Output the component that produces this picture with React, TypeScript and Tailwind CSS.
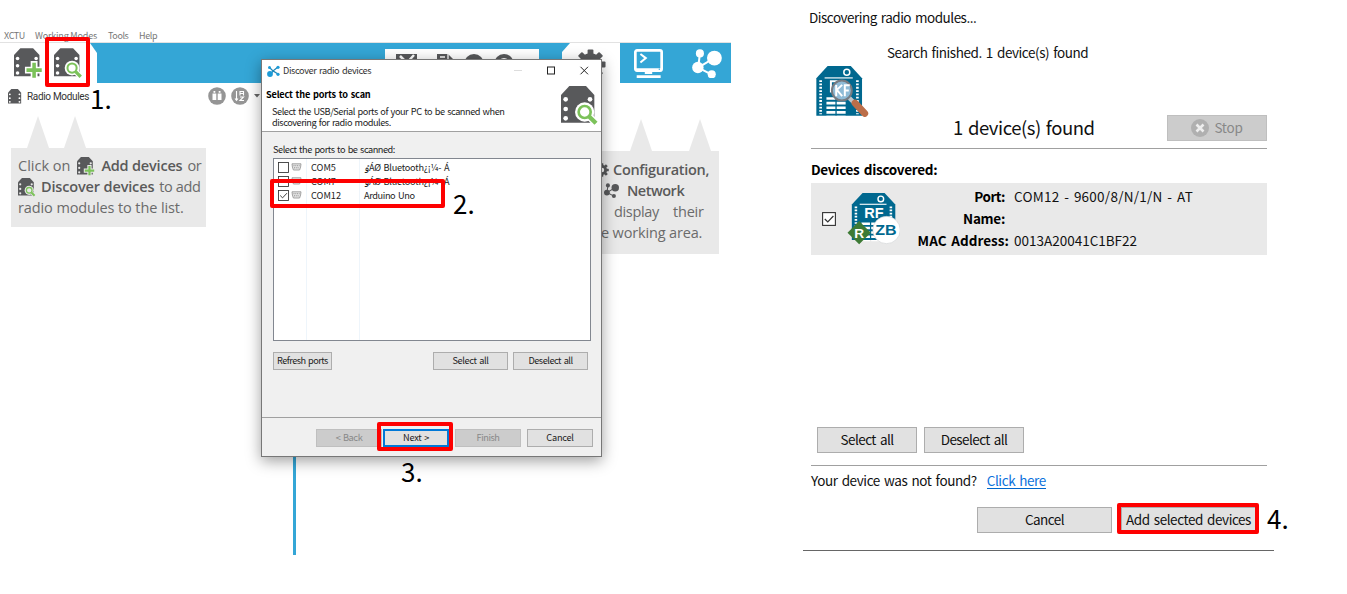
import type { ReactNode } from "react";

function T({ className = "", children }: { className?: string; children: ReactNode }) {
  return <span className={"inline-block whitespace-pre " + className}>{children}</span>;
}

function Module({ kind, className, halo = "#fff" }: { kind: "add" | "find" | "plain"; className: string; halo?: string }) {
  return (
    <svg viewBox="0 0 114 120" className={"shrink-0 " + className}>
      <path d="M0 27 25 0H75L100 27V110H0Z" fill="#58595b" />
      <g fill={halo}>
        <circle cx="14" cy="40" r="7" />
        <circle cx="14" cy="69" r="7" />
        <circle cx="14" cy="97" r="7" />
        <circle cx="87" cy="40" r="7" />
        {kind === "plain" && <circle cx="87" cy="69" r="7" />}
        {kind === "plain" && <circle cx="87" cy="97" r="7" />}
      </g>
      {kind === "find" && (
        <>
          <circle cx="71" cy="78" r="29" fill={halo} />
          <path d="m86 93 20 20" stroke={halo} strokeWidth="22" />
          <circle cx="71" cy="78" r="18" fill="none" stroke="#7cc25a" strokeWidth="8" />
          <path d="m85 92 20 20" stroke="#7cc25a" strokeWidth="13" />
        </>
      )}
      {kind === "add" && (
        <>
          <path d="M79 50V122M43 86H114" stroke={halo} strokeWidth="27" />
          <path d="M79 57V116M49 86H109" stroke="#7cc25a" strokeWidth="14" />
        </>
      )}
    </svg>
  );
}

function Gear({ className }: { className: string }) {
  return (
    <svg viewBox="-16 -16 32 32" className={"shrink-0 " + className}>
      <g fill="#58595b">
        <rect x="-3" y="-15.5" width="6" height="31" rx="1" />
        <rect x="-3" y="-15.5" width="6" height="31" rx="1" transform="rotate(45)" />
        <rect x="-3" y="-15.5" width="6" height="31" rx="1" transform="rotate(90)" />
        <rect x="-3" y="-15.5" width="6" height="31" rx="1" transform="rotate(135)" />
        <circle r="11.5" />
      </g>
      <circle r="5" fill="#fff" />
    </svg>
  );
}

function Network({ className }: { className: string }) {
  return (
    <svg viewBox="0 0 88 86" className={"shrink-0 " + className} fill="currentColor" stroke="currentColor">
      <path d="M23 13 18 55 66 26M18 55 58 76" fill="none" strokeWidth="6" />
      <circle cx="23" cy="13" r="12" stroke="none" />
      <circle cx="66" cy="27" r="22" stroke="none" />
      <circle cx="17" cy="55" r="17" stroke="none" />
      <circle cx="58" cy="75" r="12" stroke="none" />
    </svg>
  );
}

function Monitor() {
  return (
    <svg viewBox="0 0 86 86" className="h-[29px] w-[29px] shrink-0">
      <rect x="4" y="4" width="78" height="60" rx="5" fill="none" stroke="#fff" strokeWidth="8" />
      <path d="M19 15 35 27 19 40" fill="none" stroke="#fff" strokeWidth="6" />
      <path d="M4 57H82V66H4ZM32 66H54V74H32ZM8 78H79V86H8Z" fill="#fff" />
      <circle cx="75" cy="60" r="2" fill="#34a6d6" />
    </svg>
  );
}

function Port() {
  return (
    <svg viewBox="0 0 11 8" className="h-2 w-[11px] shrink-0">
      <path d="M1 .8H10L9.6 4 8.6 7H2.4L1.4 4Z" fill="#e4e4e4" stroke="#9a9a9a" strokeWidth=".9" />
      <path d="M2.5 2.7H8.6M3 4.8H8" stroke="#888" strokeWidth=".9" strokeDasharray="1 .8" />
    </svg>
  );
}

function Check({ on, className }: { on?: boolean; className: string }) {
  return (
    <svg viewBox="0 0 14 14" className={"shrink-0 " + className}>
      <rect x=".6" y=".6" width="12.8" height="12.8" fill="#fff" stroke="#333" strokeWidth="1.1" />
      {on && <path d="m2.8 7 3 3 5.6-6" fill="none" stroke="#333" strokeWidth="1.2" />}
    </svg>
  );
}

function BoardBase() {
  return (
    <>
      <path d="M0 37 34 0H104L138 37V150H0Z" fill="#00688f" />
      <circle cx="92" cy="19" r="9" fill="none" stroke="#fff" strokeWidth="4.5" />
      <path d="M25 36H110" stroke="#fff" strokeWidth="3.5" />
      <path d="M13 43V146M124 43V146" stroke="#fff" strokeWidth="8" strokeDasharray="5.5 4.5" />
    </>
  );
}

function SearchBoard() {
  return (
    <svg viewBox="0 0 158 154" className="h-[51px] w-[53px] shrink-0">
      <BoardBase />
      <path d="M44 80V46H62Q70 46 70 55T62 64H46" fill="none" stroke="#fff" strokeWidth="6" />
      <path d="M44 86V146M75 86V146" stroke="#fff" strokeWidth="27" strokeDasharray="8 6" transform="translate(0 8)" />
      <circle cx="77" cy="74" r="30" fill="#8fbbd6" stroke="#777b80" strokeWidth="6" />
      <path d="M60 57V91M78 57 62 72 78 91M86 91V58H101M86 74H98" fill="none" stroke="#fff" strokeWidth="6" />
      <path d="m100 97 12 12" stroke="#c0c4c8" strokeWidth="13" />
      <path d="m117 112 29 31" stroke="#bb6e49" strokeWidth="21" strokeLinecap="round" />
    </svg>
  );
}

function RadioBoard() {
  return (
    <svg viewBox="-14 0 158 156" className="h-[52px] w-[53px] shrink-0">
      <g transform="scale(.945 .94)">
        <BoardBase />
        <path d="M44 86V146M75 86V146" stroke="#fff" strokeWidth="27" strokeDasharray="8 6" transform="translate(0 8)" />
      </g>
      <text x="37" y="74" fontSize="45" textLength="58" lengthAdjust="spacingAndGlyphs" className="font-['Liberation_Sans'] font-bold" fill="#fff">RF</text>
      <circle cx="104" cy="111" r="41" fill="#fff" stroke="#c4c8ca" strokeWidth="1.5" />
      <path d="M22 84 57 119 22 154-13 119Z" fill="#3d7a35" />
      <text x="7" y="134" fontSize="41" className="font-['Liberation_Sans'] font-bold" fill="#fff">R</text>
      <text x="70" y="127" fontSize="46" textLength="64" lengthAdjust="spacingAndGlyphs" className="font-['Liberation_Sans'] font-bold" fill="#00688f">ZB</text>
    </svg>
  );
}

function Mark({ className }: { className: string }) {
  return <div className={"pointer-events-none absolute rounded-[2px] border-4 border-[#fe0000] " + className} />;
}

function Step({ className, children }: { className: string; children: ReactNode }) {
  return <div className={"absolute text-[26px] leading-[26px] text-black " + className}>{children}</div>;
}

function SmallButton({ className, children }: { className: string; children: ReactNode }) {
  return (
    <button className={"flex h-[18px] shrink-0 items-center justify-center text-[9.2px] leading-none [word-spacing:1px] " + className}>{children}</button>
  );
}

function BigButton({ className, children }: { className: string; children: ReactNode }) {
  return (
    <button className={"flex shrink-0 items-center justify-center border text-[13.5px] leading-none [word-spacing:1.5px] " + className}>
      {children}
    </button>
  );
}

function Peaks({ className, gap }: { className: string; gap: string }) {
  return (
    <div className={"flex h-8 " + className}>
      <svg viewBox="0 0 22 32" className={"h-8 w-[22px] " + gap}>
        <path d="M11 0 22 32H0Z" fill="#e9e9e9" />
      </svg>
      <svg viewBox="0 0 22 32" className="h-8 w-[22px]">
        <path d="M11 0 22 32H0Z" fill="#e9e9e9" />
      </svg>
    </div>
  );
}

function MainWindow() {
  return (
    <div className="flex h-[555px] w-[731px] flex-col pt-[29px]">
      <div className="flex h-[13px] items-center pl-[4px] text-[9px] leading-none text-[#777]">
        <T className="w-[31px] tracking-[-0.36px]">XCTU</T>
        <T className="w-[73px] tracking-[-0.19px]">Working Modes</T>
        <T className="w-[31px] tracking-[-0.4px]">Tools</T>
        <T className="tracking-[-0.4px]">Help</T>
      </div>
      <div className="flex h-[41px] border-t border-[#e2e2e2]">
        <div className="flex w-[90px] pt-[5px] pl-[14px]">
          <Module kind="add" className="mr-[11px] h-[31px] w-[29px]" />
          <Module kind="find" className="h-[31px] w-[29px]" />
        </div>
        <div className="flex w-[480px] bg-[#34a6d6]">
          <svg viewBox="0 0 7 40" className="h-10 w-[7px]">
            <path d="M0 0 7 10V40H0Z" fill="#fff" />
          </svg>
          <div className="mt-[6px] ml-[288px] flex w-[154px] gap-5 bg-white pt-[5px] pl-[11px]">
            <svg viewBox="0 0 21 20" className="h-5 w-[21px]">
              <path d="M0 0H21V20H0Z" fill="#58595b" />
              <path d="m4 2 8 8M18 1 8 12" stroke="#fff" strokeWidth="2.5" />
            </svg>
            <svg viewBox="0 0 17 20" className="h-5 w-[17px]">
              <path d="M0 0H11L17 6V20H0Z" fill="#58595b" />
              <path d="M3 3H8M3 6H8M11 0V6H17" fill="none" stroke="#fff" strokeWidth="1.3" />
            </svg>
            <svg viewBox="0 0 20 20" className="-ml-2.5 h-5 w-5">
              <circle cx="10" cy="10" r="10" fill="#58595b" />
            </svg>
            <svg viewBox="0 0 20 20" className="-ml-2.5 h-5 w-5">
              <circle cx="10" cy="10" r="8" fill="none" stroke="#58595b" strokeWidth="4" />
            </svg>
          </div>
          <svg viewBox="0 0 8 40" className="ml-[23px] h-10 w-2">
            <path d="M8 0 0 9V40H8Z" fill="#fff" />
          </svg>
        </div>
        <div className="w-[50px] pt-[6px] pl-[5px]">
          <Gear className="h-[31px] w-[31px]" />
        </div>
        <div className="flex w-[111px] bg-[#34a6d6] pt-[6px] pl-[14px] text-white">
          <Monitor />
          <Network className="ml-[29px] h-[29px] w-[30px]" />
        </div>
      </div>
      <div className="flex flex-1">
        <div className="w-[293px]">
          <div className="flex h-[26px] items-center pl-[8px]">
            <Module kind="plain" className="mt-[2px] h-4 w-[15px]" />
            <T className="mt-[1px] ml-[4px] w-[66px] font-[Roboto] text-[10px] leading-none tracking-[-0.33px] text-[#333]">Radio Modules</T>
            <svg viewBox="0 0 18 18" className="ml-[115px] h-[18px] w-[18px]">
              <circle cx="9" cy="9" r="8.8" fill="#959595" />
              <path d="M4.5 6.500H8.300V13H4.500ZM9.700 6.500H13.500V13H9.700ZM5.500 4H7.300V5.700H5.500ZM10.700 4H12.500V5.700H10.700Z" fill="#fff" />
            </svg>
            <svg viewBox="0 0 18 18" className="ml-[5px] h-[18px] w-[18px]">
              <circle cx="9" cy="9" r="8.800" fill="#959595" />
              <path d="M5.500 4V13M4 11.500 5.500 13.300 7 11.500M9 8.500V4.500H12.500V8.500M9 6.500H12.500M9 10H12.500L9 13.500H13" fill="none" stroke="#fff" strokeWidth="1.100" />
            </svg>
            <svg viewBox="0 0 6 4" className="ml-[5px] h-1 w-[6px]">
              <path d="M0 0H6L3 3.500Z" fill="#666" />
            </svg>
          </div>
          <Peaks className="mt-[7px] pl-[27px]" gap="mr-[15px]" />
          <div className="ml-[11px] h-[79px] w-[195px] bg-[#e9e9e9] pt-[7px] pl-[7px] font-['Open_Sans'] text-[14.5px] text-[#6b6b6b]">
            <div className="flex h-[21px] items-center leading-[21px]">
              <T>Click on</T>
              <Module kind="add" halo="#e9e9e9" className="mt-[1px] mr-[6px] ml-[7px] h-[19px] w-[18px]" />
              <T className="font-semibold tracking-[-0.2px] text-[#5a5a5a]">Add devices</T>
              <T className="ml-[5px] tracking-[-0.5px]">or</T>
            </div>
            <div className="flex h-[21px] items-center leading-[21px]">
              <Module kind="find" halo="#e9e9e9" className="mt-[1px] mr-[5px] h-[19px] w-[18px]" />
              <T className="font-semibold tracking-[-0.15px] text-[#5a5a5a]">Discover devices</T>
              <T className="ml-[5px] tracking-[-0.4px]">to add</T>
            </div>
            <div className="flex h-[21px] items-center leading-[21px]">
              <T className="tracking-[-0.1px]">radio modules to the list.</T>
            </div>
          </div>
        </div>
        <div className="w-[3px] bg-[#34a6d6]" />
        <div className="flex w-[423px] flex-col items-end pt-[36px]">
          <Peaks className="pr-[8px]" gap="mr-[37px]" />
          <div className="h-[103px] w-[219px] bg-[#e9e9e9] pt-[8px] font-['Open_Sans'] text-[14.5px] leading-[21px] text-[#6b6b6b]">
            <div className="flex h-[21px] items-center pl-[95px]">
              <Gear className="mr-[4px] h-[14px] w-[14px]" />
              <T className="font-semibold tracking-[-0.3px] text-[#5a5a5a]">Configuration,</T>
            </div>
            <div className="flex h-[21px] items-center pl-[104px]">
              <Network className="mr-[8px] h-[15px] w-[15px] text-[#58595b]" />
              <T className="font-semibold tracking-[-0.5px] text-[#5a5a5a]">Network</T>
            </div>
            <div className="flex h-[21px] items-center pl-[114px]">
              <T className="w-[59px] tracking-[-0.33px]">display</T>
              <T className="tracking-[-0.2px]">their</T>
            </div>
            <div className="flex h-[21px] items-center pl-[101px]">
              <T className="tracking-[-0.16px]">e working area.</T>
            </div>
          </div>
        </div>
      </div>
    </div>
  );
}

function PortRow({ on, name, desc, tone }: { on?: boolean; name: string; desc: string; tone: string }) {
  return (
    <div className="flex h-[14px] items-center pl-[4px] leading-none">
      <Check on={on} className="h-[11px] w-[11px]" />
      <span className="ml-[2px] flex w-[20px]"><Port /></span>
      <span className="mt-[1px] w-[53px]">{name}</span>
      <T className={"mt-[1px] " + tone}>{desc}</T>
    </div>
  );
}

function DiscoverDialog() {
  return (
    <div className="absolute top-[59px] left-[261px] flex h-[398px] w-[341px] flex-col border border-[#777] bg-[#f0f0f0] text-[9.2px] leading-none text-[#222] shadow-[0_4px_14px_rgba(0,0,0,0.38)] [word-spacing:1px]">
      <div className="h-[72px] border-b border-[#a0a0a0] bg-white">
        <div className="flex h-[21px] items-center pl-[5px]">
          <svg viewBox="0 0 13 12" className="h-3 w-[13px]">
            <path d="M3 3 6 6 11 2M4 9 6 6 11 9" fill="none" stroke="#1e86b8" strokeWidth="1.300" />
            <circle cx="3" cy="9" r="2.900" fill="#1e9bd7" />
            <circle cx="2.500" cy="2.500" r="1.500" fill="#1e9bd7" />
            <circle cx="11" cy="2.300" r="1.600" fill="#1e9bd7" />
            <circle cx="11" cy="9.300" r="1.600" fill="#1e9bd7" />
          </svg>
          <T className="ml-[3px] w-[230px] tracking-[-0.4px] text-[#333]">Discover radio devices</T>
          <svg viewBox="0 0 76 9" className="h-[9px] w-[76px]">
            <path d="M1 4.500H9" stroke="#ddd" />
            <rect x="34.500" y="1" width="7" height="7" fill="none" stroke="#222" />
            <path d="m67.500 .8 7.500 7.500m0-7.500-7.500 7.500" stroke="#222" />
          </svg>
        </div>
        <div className="flex justify-between">
          <div className="pt-[7px] pl-[4px]">
            <div className="flex h-[13px] items-center"><T className="font-bold tracking-[-0.2px] text-black">Select the ports to scan</T></div>
            <div className="mt-[5px] flex h-[11px] items-center pl-[6px]"><T className="tracking-[-0.46px]">Select the USB/Serial ports of your PC to be scanned when</T></div>
            <div className="flex h-[11px] items-center pl-[6px]"><T className="tracking-[-0.46px]">discovering for radio modules.</T></div>
          </div>
          <Module kind="find" className="mt-[5px] mr-[2px] h-10 w-[38px]" />
        </div>
      </div>
      <div className="h-[286px] border-b border-[#a0a0a0] px-[11px] pt-[11px]">
        <div className="mb-[1px] flex h-[14px] items-center"><T className="tracking-[-0.47px]">Select the ports to be scanned:</T></div>
        <div className="flex h-[183px] w-[318px] border border-[#828790] bg-white">
          <div className="relative w-full">
            <div className="absolute inset-y-0 left-[32px] w-[54px] border-x border-[#eef5fb]" />
            <div className="relative pt-[1px]">
              <PortRow name="COM5" desc="ٶÁØ Bluetooth¿¡¼- Á" tone="tracking-[-0.26px]" />
              <PortRow name="COM7" desc="ٶÁØ Bluetooth¿¡¼- Á" tone="tracking-[-0.26px]" />
              <PortRow on name="COM12" desc="Arduino Uno" tone="tracking-[-0.39px]" />
            </div>
          </div>
        </div>
        <div className="mt-[11px] flex">
          <SmallButton className="w-[59px] border border-[#adadad] bg-[#e1e1e1]"><T className="tracking-[-0.54px]">Refresh ports</T></SmallButton>
          <SmallButton className="ml-[101px] w-[75px] border border-[#adadad] bg-[#e1e1e1]"><T className="tracking-[-0.36px]">Select all</T></SmallButton>
          <SmallButton className="ml-[5px] w-[75px] border border-[#adadad] bg-[#e1e1e1]"><T className="tracking-[-0.48px]">Deselect all</T></SmallButton>
        </div>
      </div>
      <div className="flex pt-[11px] pl-[54px]">
        <SmallButton className="w-[66px] border border-[#bfbfbf] bg-[#ccc] text-[#888]"><T className="tracking-[-0.42px]">{"< Back"}</T></SmallButton>
        <SmallButton className="ml-[1px] w-[66px] border-2 border-[#0078d7] bg-[#e1e1e1]"><T className="tracking-[-0.28px]">{"Next >"}</T></SmallButton>
        <SmallButton className="ml-[6px] w-[66px] border border-[#bfbfbf] bg-[#ccc] text-[#888]"><T className="tracking-[-0.47px]">Finish</T></SmallButton>
        <SmallButton className="ml-[6px] w-[66px] border border-[#adadad] bg-[#e1e1e1]"><T className="tracking-[-0.25px]">Cancel</T></SmallButton>
      </div>
    </div>
  );
}

function ResultsPanel() {
  return (
    <div className="flex h-[551px] w-[471px] flex-col border-b border-[#666] pr-[7px] pl-[8px] text-[13.5px] leading-none text-[#111] [word-spacing:1.5px]">
      <div className="flex h-[33px] items-center pt-[2px]"><T className="-ml-[2px] tracking-[-0.5px]">Discovering radio modules...</T></div>
      <div className="flex h-[115px] pl-[5px]">
        <div className="pt-[33px]"><SearchBoard /></div>
        <div className="ml-[18px] flex flex-col pt-[13px]">
          <T className="h-[14px] tracking-[-0.44px]">Search finished. 1 device(s) found</T>
          <T className="mt-[58px] ml-[66px] text-[18.5px] tracking-[-0.47px]">1 device(s) found</T>
        </div>
        <div className="ml-auto pt-[82px]">
          <BigButton className="h-[26px] w-[100px] border-[#bfbfbf] bg-[#ccc] text-[#888]">
            <svg viewBox="0 0 18 18" className="mr-[5px] h-[18px] w-[18px]">
              <circle cx="9" cy="9" r="9" fill="#b0b0b0" />
              <path d="m5.500 5.500 7 7m0-7-7 7" stroke="#eee" strokeWidth="2.600" />
            </svg>
            <T className="tracking-[-0.25px]">Stop</T>
          </BigButton>
        </div>
      </div>
      <div className="h-px bg-[#a0a0a0]" />
      <div className="flex h-[34px] items-center pt-[7px]"><T className="font-bold tracking-[-0.29px] text-black">Devices discovered:</T></div>
      <div className="flex h-[72px] items-center bg-[#e9e9e9] pl-[11px]">
        <Check on className="h-[14px] w-[14px]" />
        <div className="ml-[11px]"><RadioBoard /></div>
        <div className="ml-[16px] flex w-[93px] flex-col items-end font-bold text-black">
          <div className="flex h-[22px] items-center pr-[4px]"><T className="tracking-[-0.5px]">Port:</T></div>
          <div className="flex h-[22px] items-center pr-[4px]"><T className="tracking-[-0.28px]">Name:</T></div>
          <div className="flex h-[22px] items-center"><T className="tracking-[0.05px]">MAC Address:</T></div>
        </div>
        <div className="ml-[5px] flex flex-col">
          <div className="flex h-[22px] items-center"><T className="tracking-[0.25px]">COM12 - 9600/8/N/1/N - AT</T></div>
          <div className="h-[22px]" />
          <div className="flex h-[22px] items-center"><T>0013A20041C1BF22</T></div>
        </div>
      </div>
      <div className="mt-[172px] flex gap-[7px] pl-[6px]">
        <BigButton className="h-[26px] w-[100px] border-[#adadad] bg-[#e1e1e1]"><T className="tracking-[-0.54px]">Select all</T></BigButton>
        <BigButton className="h-[26px] w-[100px] border-[#adadad] bg-[#e1e1e1]"><T className="tracking-[-0.57px]">Deselect all</T></BigButton>
      </div>
      <div className="mt-[12px] h-px bg-[#a0a0a0]" />
      <div className="flex h-[30px] items-center">
        <T className="tracking-[-0.41px]">Your device was not found?</T>
        <T className="ml-[10px] h-[15px] border-b border-[#0066cc] tracking-[-0.42px] text-[#0d72dc]">Click here</T>
      </div>
      <div className="mt-[11px] flex pl-[166px]">
        <BigButton className="h-[26px] w-[135px] border-[#adadad] bg-[#e1e1e1]"><T className="tracking-[-0.57px]">Cancel</T></BigButton>
        <BigButton className="ml-[9px] h-[26px] w-[135px] border-[#adadad] bg-[#e1e1e1]"><T className="tracking-[-0.43px]">Add selected devices</T></BigButton>
      </div>
    </div>
  );
}

export default function App() {
  return (
    <div className="relative flex h-[594px] w-[1347px] overflow-hidden bg-white font-['Noto_Sans_CJK_KR',sans-serif]">
      <div className="w-[803px]"><MainWindow /></div>
      <ResultsPanel />
      <DiscoverDialog />
      <Mark className="top-[37px] left-[45px] h-[50px] w-[45px]" />
      <Mark className="top-[179px] left-[270px] h-[29px] w-[175px]" />
      <Mark className="top-[422px] left-[377px] h-[29px] w-[76px]" />
      <Mark className="top-[503px] left-[1117px] h-[31px] w-[142px]" />
      <Step className="top-[85px] left-[90px]">1.</Step>
      <Step className="top-[190px] left-[453px]">2.</Step>
      <Step className="top-[458px] left-[401px]">3.</Step>
      <Step className="top-[505px] left-[1267px]">4.</Step>
    </div>
  );
}
